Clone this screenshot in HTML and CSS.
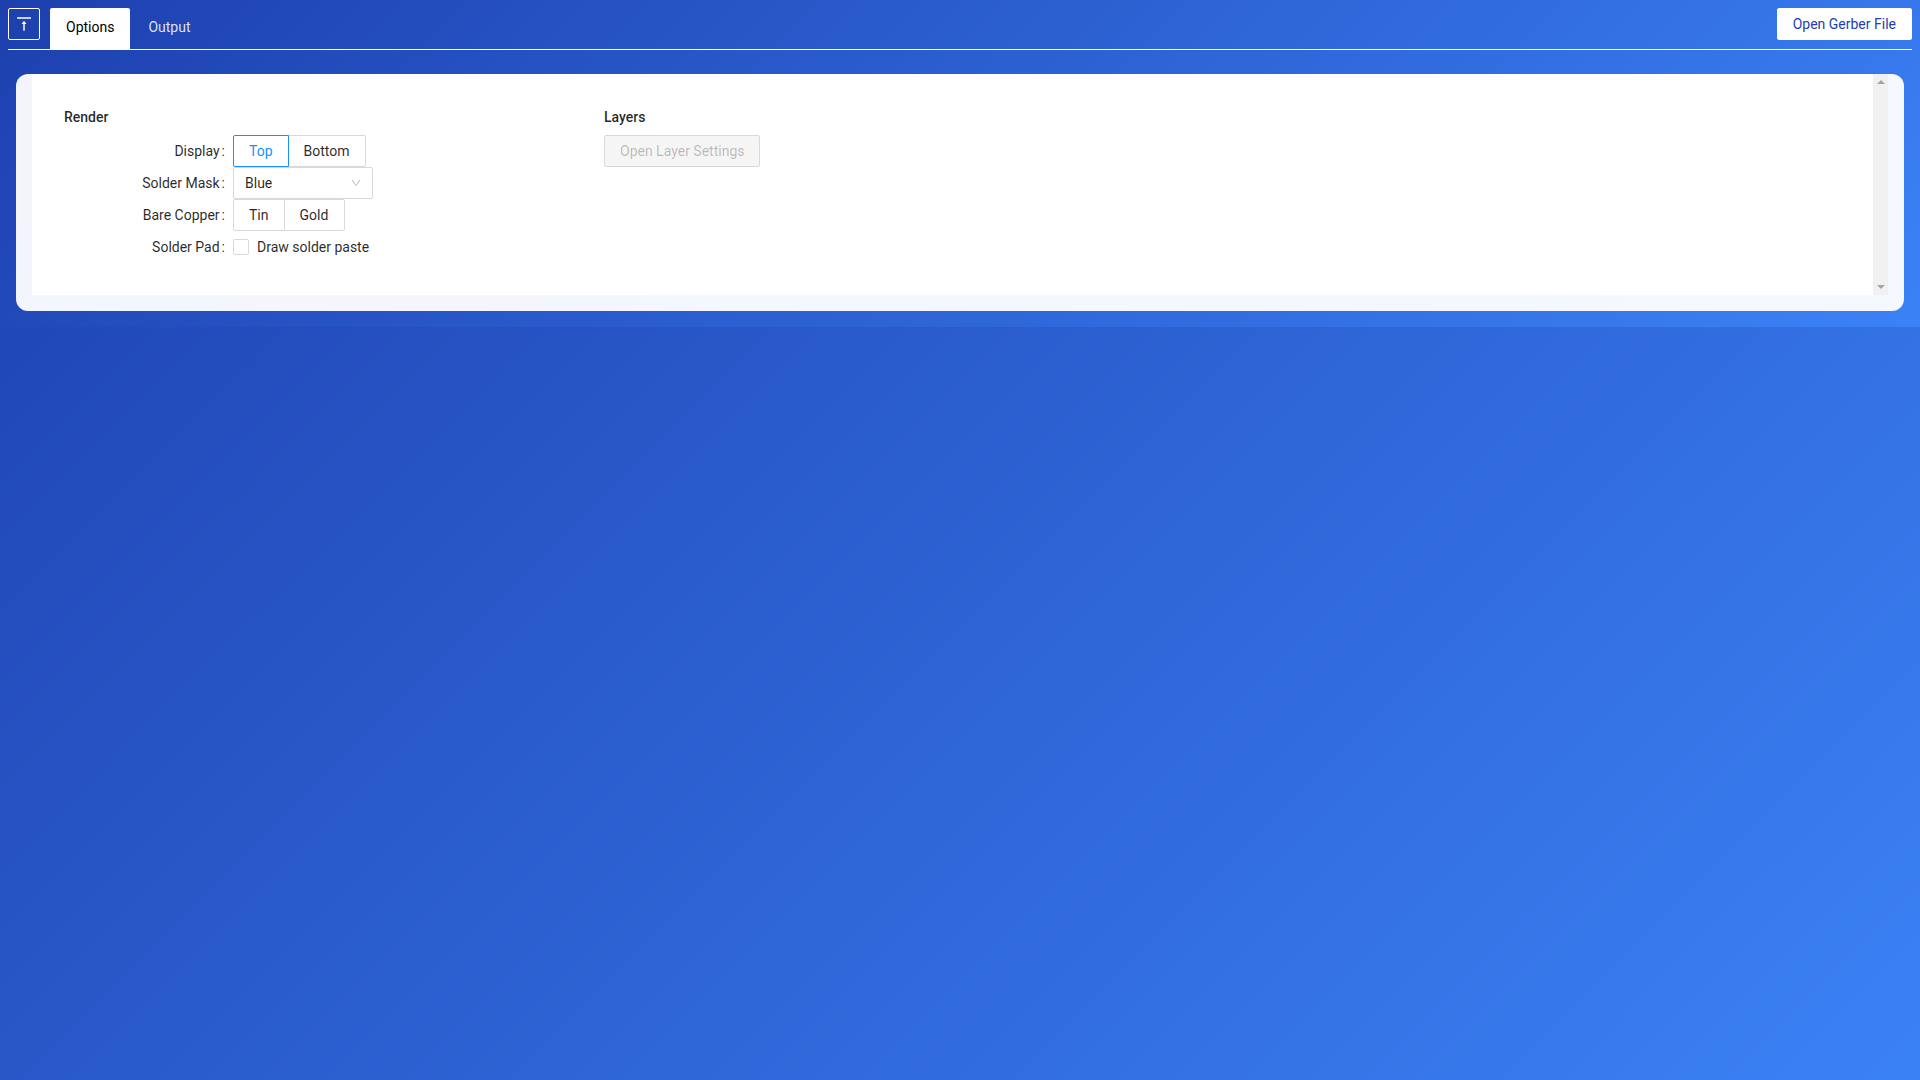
FILE: index.html
```html
<!DOCTYPE html>
<html lang="en">
<head>
<meta charset="utf-8">
<title>Gerber Viewer</title>
<link rel="stylesheet" href="styles.css">
</head>
<body>
<div class="app">
  <div class="top">
    <header class="bar">
      <button class="collapse" type="button" aria-label="Collapse">
        <svg viewBox="0 0 1024 1024" width="20" height="20" fill="currentColor"><path d="M859.9 168H164.1c-4.5 0-8.1 3.6-8.1 8v60c0 4.4 3.6 8 8.1 8h695.8c4.5 0 8.1-3.6 8.1-8v-60c0-4.4-3.6-8-8.1-8zM518.3 355a8 8 0 0 0-12.6 0l-112 141.7a7.98 7.98 0 0 0 6.3 12.9h73.9V848c0 4.4 3.6 8 8 8h60c4.4 0 8-3.6 8-8V509.700h74.100c6.700 0 10.400-7.700 6.300-12.900L518.300 355z"/></svg>
      </button>
      <nav class="tabs">
        <a class="tab active">Options</a>
        <a class="tab">Output</a>
      </nav>
      <button class="open" type="button">Open Gerber File</button>
    </header>
    <section class="card">
      <div class="inner">
        <div class="content">
          <div class="col col-render">
            <h2 class="title">Render</h2>
            <div class="row">
              <span class="label">Display</span>
              <div class="group"><button class="seg on" type="button">Top</button><button class="seg" type="button">Bottom</button></div>
            </div>
            <div class="row">
              <span class="label">Solder Mask</span>
              <div class="select"><span>Blue</span>
                <svg class="chev" viewBox="0 0 1024 1024" width="12" height="12" fill="currentColor"><path d="M884 256h-75c-5.100 0-9.900 2.500-12.900 6.600L512 654.200 227.900 262.600c-3-4.100-7.800-6.600-12.900-6.600h-75c-6.500 0-10.300 7.400-6.500 12.700l352.600 486.100c12.800 17.600 39 17.600 51.700 0l352.600-486.100c3.900-5.300.1-12.700-6.400-12.700z"/></svg>
              </div>
            </div>
            <div class="row">
              <span class="label">Bare Copper</span>
              <div class="group"><button class="seg" type="button">Tin</button><button class="seg seg-wide" type="button">Gold</button></div>
            </div>
            <div class="row">
              <span class="label">Solder Pad</span>
              <label class="check"><span class="box"></span><span>Draw solder paste</span></label>
            </div>
          </div>
          <div class="col">
            <h2 class="title">Layers</h2>
            <button class="disabled" type="button" disabled>Open Layer Settings</button>
          </div>
        </div>
        <div class="scrollbar"><span class="up"></span><span class="down"></span></div>
      </div>
    </section>
  </div>
</div>
</body>
</html>
```
FILE: styles.css
```css
* { box-sizing: border-box; }
html, body { margin: 0; height: 100%; }
body { font-family: Roboto, "Liberation Sans", sans-serif; font-size: 14px; line-height: 1.5715; color: rgba(0,0,0,.85); font-variant: tabular-nums; font-feature-settings: "tnum"; }
button { font: inherit; font-feature-settings: inherit; margin: 0; cursor: pointer; }
.app { min-height: 100vh; background: linear-gradient(135deg, #1e40af, #3b82f6); }
.top { background: linear-gradient(135deg, #1e40af, #3b82f6); padding: 8px 8px 16px; }
.bar { display: flex; align-items: flex-start; height: 42px; border-bottom: 1px solid #fff; }
.collapse { width: 32px; height: 32px; padding: 0; margin-right: 10px; background: transparent; border: 1px solid #fff; border-radius: 2px; color: #fff; display: flex; align-items: center; justify-content: center; }
.tabs { display: flex; flex: 1; }
.tab { height: 41px; padding: 8px 16px 0; border-radius: 2px 2px 0 0; color: rgba(255,255,255,.85); line-height: 22px; }
.tab + .tab { margin-left: 2px; }
.tab.active { background: #fff; color: #000; }
.open { height: 32px; padding: 0 15px; background: #fff; border: 1px solid #fff; border-radius: 2px; color: #1e40af; }
.card { margin: 24px 8px 0; padding: 0 16px 16px; background: rgba(255,255,255,.95); border-radius: 12px; }
.inner { display: flex; height: 221px; background: #fff; }
.content { flex: 1; display: flex; padding: 32px; }
.col-render { width: 540px; }
.title { margin: 0 0 7px; font-size: 14px; font-weight: 500; line-height: 22px; }
.row { display: flex; height: 32px; align-items: center; }
.label { width: 169px; padding-right: 8px; text-align: right; }
.label::after { content: ":"; margin-left: 2px; }
.group { display: flex; }
.seg { height: 32px; padding: 0 15px; background: #fff; border: 1px solid #d9d9d9; color: rgba(0,0,0,.85); }
.seg:first-child { border-radius: 2px 0 0 2px; }
.seg:last-child { border-radius: 0 2px 2px 0; margin-left: -1px; }
.seg-wide { padding-right: 16px; }
.seg.on { border-color: #1890ff; color: #1890ff; position: relative; z-index: 1; }
.select { width: 140px; height: 32px; display: flex; align-items: center; justify-content: space-between; padding: 0 10px 0 11px; border: 1px solid #d9d9d9; border-radius: 2px; background: #fff; }
.chev { color: rgba(0,0,0,.25); }
.check { display: flex; align-items: center; }
.box { width: 16px; height: 16px; margin-right: 8px; border: 1px solid #d9d9d9; border-radius: 2px; background: #fff; }
.disabled { height: 32px; padding: 0 15px; background: #f5f5f5; border: 1px solid #d9d9d9; border-radius: 2px; color: rgba(0,0,0,.25); cursor: not-allowed; }
.scrollbar { width: 15px; background: #f1f1f1; display: flex; flex-direction: column; justify-content: space-between; align-items: center; padding: 6px 0; }
.up, .down { width: 0; height: 0; border-left: 4px solid transparent; border-right: 4px solid transparent; }
.up { border-bottom: 4px solid #a3a3a3; }
.down { border-top: 4px solid #a3a3a3; }
```
